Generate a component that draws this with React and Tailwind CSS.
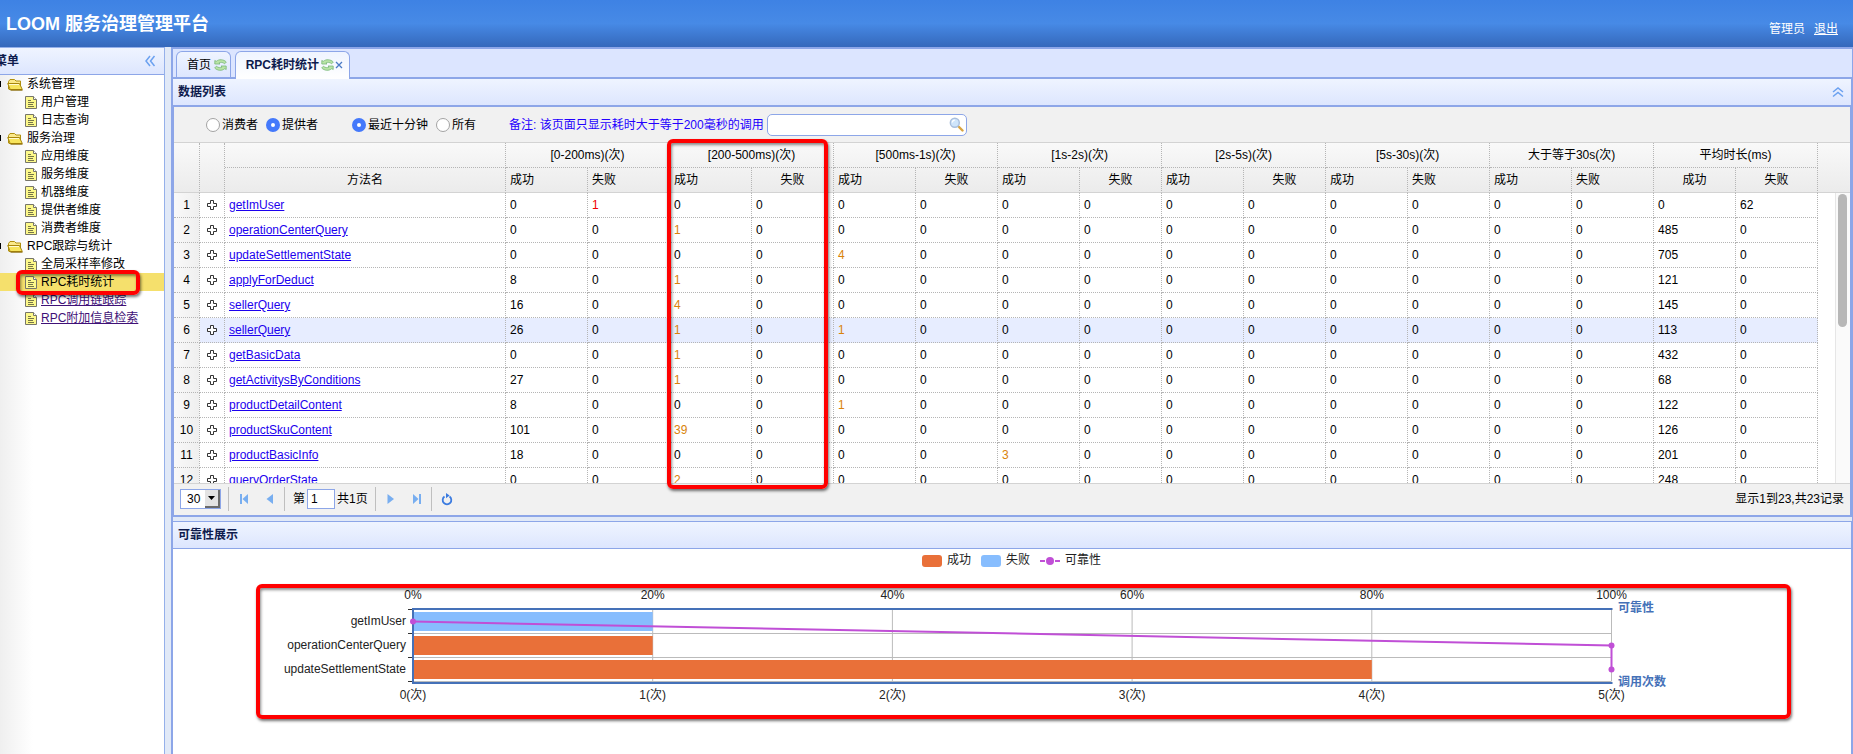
import React from "react";

const RED_BOX =
  "pointer-events-none absolute z-10 rounded-md border-4 border-[#ff0000] shadow-[1px_2px_3px_rgba(0,0,0,0.55),inset_1px_2px_3px_rgba(0,0,0,0.45)]";

const tree = [
  { label: "系统管理", children: [{ label: "用户管理" }, { label: "日志查询" }] },
  {
    label: "服务治理",
    children: [
      { label: "应用维度" },
      { label: "服务维度" },
      { label: "机器维度" },
      { label: "提供者维度" },
      { label: "消费者维度" },
    ],
  },
  {
    label: "RPC跟踪与统计",
    children: [
      { label: "全局采样率修改" },
      { label: "RPC耗时统计", active: true },
      { label: "RPC调用链跟踪", visited: true },
      { label: "RPC附加信息检索", visited: true },
    ],
  },
];

const groups = [
  { label: "[0-200ms)(次)", ok: "text-left", fail: "text-left" },
  { label: "[200-500ms)(次)", ok: "text-left", fail: "text-center" },
  { label: "[500ms-1s)(次)", ok: "text-left", fail: "text-center" },
  { label: "[1s-2s)(次)", ok: "text-left", fail: "text-center" },
  { label: "[2s-5s)(次)", ok: "text-left", fail: "text-center" },
  { label: "[5s-30s)(次)", ok: "text-left", fail: "text-left" },
  { label: "大于等于30s(次)", ok: "text-left", fail: "text-left" },
  { label: "平均时长(ms)", ok: "text-center", fail: "text-center" },
];

const rows = [
  ["getImUser", 0, 1, 0, 0, 0, 0, 0, 0, 0, 0, 0, 0, 0, 0, 0, 62],
  ["operationCenterQuery", 0, 0, 1, 0, 0, 0, 0, 0, 0, 0, 0, 0, 0, 0, 485, 0],
  ["updateSettlementState", 0, 0, 0, 0, 4, 0, 0, 0, 0, 0, 0, 0, 0, 0, 705, 0],
  ["applyForDeduct", 8, 0, 1, 0, 0, 0, 0, 0, 0, 0, 0, 0, 0, 0, 121, 0],
  ["sellerQuery", 16, 0, 4, 0, 0, 0, 0, 0, 0, 0, 0, 0, 0, 0, 145, 0],
  ["sellerQuery", 26, 0, 1, 0, 1, 0, 0, 0, 0, 0, 0, 0, 0, 0, 113, 0],
  ["getBasicData", 0, 0, 1, 0, 0, 0, 0, 0, 0, 0, 0, 0, 0, 0, 432, 0],
  ["getActivitysByConditions", 27, 0, 1, 0, 0, 0, 0, 0, 0, 0, 0, 0, 0, 0, 68, 0],
  ["productDetailContent", 8, 0, 0, 0, 1, 0, 0, 0, 0, 0, 0, 0, 0, 0, 122, 0],
  ["productSkuContent", 101, 0, 39, 0, 0, 0, 0, 0, 0, 0, 0, 0, 0, 0, 126, 0],
  ["productBasicInfo", 18, 0, 0, 0, 0, 0, 3, 0, 0, 0, 0, 0, 0, 0, 201, 0],
  ["queryOrderState", 0, 0, 2, 0, 0, 0, 0, 0, 0, 0, 0, 0, 0, 0, 248, 0],
];

function valueColor(value, index) {
  if (value === 0 || index >= 14) return "text-black";
  if (index % 2 === 1) return "text-[#f00000]";
  return index >= 2 ? "text-[#d9830a]" : "text-black";
}

function FolderIcon() {
  return (
    <svg width="16" height="18" viewBox="0 0 16 18" className="shrink-0" aria-hidden="true">
      <path d="M1.500 14V6.500L3 4.500h4.500L9 6h4.500v8.500H2z" fill="#fbe98a" stroke="#b0900f" />
      <path d="M.7 8.500h11.800l2.800 6H3.200z" fill="#f7e45c" stroke="#a8860c" strokeLinejoin="round" />
      <path d="M2 9.500h10" stroke="#fffbd0" />
      <path d="M3.500 15.200h12" stroke="#8a6c08" />
    </svg>
  );
}

function FileIcon() {
  return (
    <svg width="16" height="18" viewBox="0 0 16 18" className="shrink-0" aria-hidden="true">
      <path d="M2.500 3.500h8l3 3v9h-11z" fill="#fdf98a" stroke="#77766a" />
      <path d="M10.500 3.500v3h3" fill="#fff" stroke="#77766a" />
      <path d="M5 7.500h3M5 9.500h6M5 11.500h5M5 13.500h6" stroke="#77764a" />
    </svg>
  );
}

function RefreshTabIcon() {
  return (
    <svg width="13" height="14" viewBox="0 0 13 14" aria-hidden="true">
      <path d="M.8 6V2.500l1.500.8C5 1 9.500 1.200 12.300 4L10.600 5.800C8.800 4.200 6.800 4 5 4.900L6 6z" fill="#b9e4a6" stroke="#79b878" strokeWidth=".8" />
      <path d="M12.200 8v3.500l-1.500-.8C8 13 3.500 12.800.7 10l1.700-1.800c1.800 1.600 3.800 1.800 5.600.9L7 8z" fill="#b9e4a6" stroke="#79b878" strokeWidth=".8" />
    </svg>
  );
}

function Chevrons({ up }) {
  return (
    <svg width="12" height="12" viewBox="0 0 12 12" fill="none" stroke="#6ba1f0" strokeWidth="1.500" aria-hidden="true">
      {up ? <path d="M1 6l5-4 5 4M1 10.500l5-4 5 4" /> : <path d="M6 1L2 6l4 5M10.500 1l-4 5 4 5" />}
    </svg>
  );
}

function ExpandIcon() {
  return (
    <svg width="10" height="10" viewBox="0 0 10 10" aria-hidden="true">
      <path d="M3.500.5h3v3h3v3h-3v3h-3v-3h-3v-3h3z" fill="#fff" stroke="#333" />
    </svg>
  );
}

function Radio({ name, label, defaultChecked, className }) {
  return (
    <label className={`flex items-center gap-[2px] ${className}`}>
      <input
        type="radio"
        name={name}
        defaultChecked={defaultChecked}
        className="size-[14px] appearance-none rounded-full border border-[#a3a3a3] bg-white checked:border-[5px] checked:border-[#4479fb]"
      />
      {label}
    </label>
  );
}

function Header() {
  return (
    <header className="flex h-[47px] shrink-0 justify-between bg-linear-to-b from-[#3e82e4] via-[#478ae6] to-[#3568bb] text-white">
      <h1 className="pt-3 pl-[6px] text-lg leading-6 font-bold">LOOM 服务治理管理平台</h1>
      <div className="flex gap-[9px] pt-5 pr-[15px] leading-[18px]">
        <span>管理员</span>
        <a href="#logout" className="underline">退出</a>
      </div>
    </header>
  );
}

function Sidebar() {
  return (
    <aside className="flex w-[165px] shrink-0 flex-col border-t border-r border-[#95b0ea] bg-linear-to-r from-[#efefef] to-white to-20%">
      <div className="flex h-[27px] shrink-0 items-center justify-between border-b border-[#8da6e8] bg-linear-to-b from-[#eff4ff] to-[#dde6fe] pr-2 font-bold text-[#0e1b4d]">
        <h2 className="-ml-[5px]">菜单</h2>
        <button type="button" aria-label="收起菜单"><Chevrons /></button>
      </div>
      <nav className="relative">
        <ul>
          {tree.map((group) => (
            <li key={group.label}>
              <div className="flex h-[18px] items-center gap-[2px] whitespace-nowrap">
                <span className="h-[6px] w-[1px] bg-black" />
                <span className="w-[2px]" />
                <FolderIcon />
                <span className="pl-[2px]">{group.label}</span>
              </div>
              <ul>
                {group.children.map((item) => (
                  <li key={item.label} className={`flex h-[18px] items-center whitespace-nowrap pl-[23px] ${item.active ? "bg-[#f5e06c]" : ""}`}>
                    <FileIcon />
                    <a href="#page" className={`ml-[2px] ${item.visited ? "text-[#3f1177] underline" : ""}`}>{item.label}</a>
                  </li>
                ))}
              </ul>
            </li>
          ))}
        </ul>
        <div className={`${RED_BOX} top-[195px] left-4 h-[25px] w-[124px]`} />
      </nav>
    </aside>
  );
}

function Tabs() {
  return (
    <div role="tablist" className="flex h-[30px] shrink-0 items-end gap-1 border-b-2 border-[#8da6e8] bg-[#dce5ff] pl-[3px]">
      <div className="flex h-[26px] w-[55px] items-center justify-end gap-[3px] rounded-t-md border border-b-0 border-[#8da6e8] bg-linear-to-b from-[#eff4ff] to-[#dde6fe] pr-[3px]">
        <button type="button" role="tab" aria-selected="false">首页</button>
        <button type="button" aria-label="刷新首页"><RefreshTabIcon /></button>
      </div>
      <div className="-mb-[2px] flex h-[28px] w-[115px] items-center justify-end rounded-t-md border border-b-0 border-[#8da6e8] bg-linear-to-b from-[#eff4ff] to-white pr-[6px] pb-[2px] font-bold text-[#0e1b4d]">
        <button type="button" role="tab" aria-selected="true" className="mr-[2px] whitespace-nowrap">RPC耗时统计</button>
        <button type="button" aria-label="刷新"><RefreshTabIcon /></button>
        <button type="button" aria-label="关闭" className="ml-[1px]">
          <svg width="8" height="8" viewBox="0 0 8 8" stroke="#4a7ac4" strokeWidth="1.300" aria-hidden="true"><path d="M1 1l6 6M7 1L1 7" /></svg>
        </button>
      </div>
    </div>
  );
}

function Toolbar() {
  return (
    <div className="flex h-[36px] items-center border-b border-[#d3d3d3] bg-[#f1f1f1] pl-8">
      <Radio name="role" label="消费者" className="w-[60px]" />
      <Radio name="role" label="提供者" defaultChecked className="w-[86px]" />
      <Radio name="period" label="最近十分钟" defaultChecked className="w-[84px]" />
      <Radio name="period" label="所有" className="w-[73px]" />
      <label htmlFor="search" className="w-[258px] whitespace-nowrap text-[#2300ff]">备注: 该页面只显示耗时大于等于200毫秒的调用</label>
      <div className="flex h-[22px] w-[200px] items-center rounded-[5px] border border-[#8da6e8] bg-white pr-[2px]">
        <input id="search" type="text" className="min-w-0 flex-1 px-1 outline-none" />
        <button type="button" aria-label="搜索">
          <svg width="15" height="15" viewBox="0 0 15 15" aria-hidden="true">
            <path d="M9.500 9.500l4 4" stroke="#d9a441" strokeWidth="2.400" strokeLinecap="round" />
            <circle cx="5.800" cy="5.800" r="4.500" fill="#cfe5fb" stroke="#a9bfdd" strokeWidth="1.400" />
            <path d="M3.300 5.500a2.600 2.600 0 0 1 2.500-2.300" fill="none" stroke="#fff" strokeWidth="1.200" />
          </svg>
        </button>
      </div>
    </div>
  );
}

const HEAD = "h-[25px] border-r border-dotted border-[#b5b5b5] px-1 font-normal";
const HEAD_LAST = "border-b border-b-[#d3d3d3] [border-bottom-style:solid]";
const CELL = "h-[25px] border-r border-b border-dotted border-[#b5b5b5] px-1";

function DataGrid() {
  return (
    <div className="relative h-[340px] overflow-hidden bg-white">
      <table className="w-full table-fixed border-separate border-spacing-0 whitespace-nowrap">
        <colgroup>
          <col className="w-[26px]" />
          <col className="w-[25px]" />
          <col className="w-[281px]" />
          {groups.map((g) => [
            <col key={`${g.label}-ok`} className="w-[82px]" />,
            <col key={`${g.label}-fail`} className="w-[82px]" />,
          ])}
          <col />
        </colgroup>
        <thead className="bg-linear-to-b from-[#f9f9f9] to-[#ebebeb]">
          <tr>
            <th rowSpan={2} className={`${HEAD} ${HEAD_LAST}`} />
            <th rowSpan={2} className={`${HEAD} ${HEAD_LAST}`} />
            <th className={`${HEAD} border-b`} />
            {groups.map((g) => (
              <th key={g.label} colSpan={2} className={`${HEAD} border-b`}>{g.label}</th>
            ))}
            <th rowSpan={2} className="border-b border-[#d3d3d3]" />
          </tr>
          <tr>
            <th className={`${HEAD} ${HEAD_LAST}`}>方法名</th>
            {groups.map((g) => [
              <th key={`${g.label}-ok`} className={`${HEAD} ${HEAD_LAST} ${g.ok}`}>成功</th>,
              <th key={`${g.label}-fail`} className={`${HEAD} ${HEAD_LAST} ${g.fail}`}>失败</th>,
            ])}
          </tr>
        </thead>
        <tbody>
          {rows.map(([name, ...values], r) => (
            <tr key={r} className={r === 5 ? "bg-[#e7edff]" : ""}>
              <td className="h-[25px] border-r border-b border-dotted border-[#b5b5b5] bg-linear-to-r from-[#f9f9f9] to-[#efefef] text-center">{r + 1}</td>
              <td className="border-r border-b border-dotted border-[#b5b5b5]">
                <button type="button" aria-label="展开" className="flex w-full justify-center"><ExpandIcon /></button>
              </td>
              <td className={CELL}><a href="#method" className="text-[#1c00ee] underline">{name}</a></td>
              {values.map((v, i) => (
                <td key={i} className={`${CELL} ${valueColor(v, i)}`}>{v}</td>
              ))}
              <td className="bg-white" />
            </tr>
          ))}
        </tbody>
      </table>
      <div className="absolute top-[50px] right-0 bottom-0 w-[15px] border-l border-[#e6e6e6] bg-[#fafafa] px-[2px] pt-[1px]">
        <div className="h-[133px] w-[9px] rounded-full bg-[#b7b7b7]" />
      </div>
    </div>
  );
}

function PagerButton({ label, path, className }) {
  return (
    <button type="button" aria-label={label} className={className}>
      <svg width="10" height="12" viewBox="0 0 10 12" fill="#78aef0" aria-hidden="true"><path d={path} /></svg>
    </button>
  );
}

function Pager() {
  return (
    <div className="flex h-[32px] items-center border-t border-[#d3d3d3] bg-[#f1f1f1] pr-[6px] pb-[1px] pl-[6px]">
      <div className="relative flex h-5 w-[41px] border border-[#8da6e8] bg-white">
        <select aria-label="每页条数" className="w-full appearance-none pl-[6px] outline-none" defaultValue="30">
          <option>30</option>
        </select>
        <span className="pointer-events-none absolute top-0 right-0 flex h-[18px] w-[15px] items-center justify-center border-r-2 border-b-2 border-[#6b6b6b] bg-[#e3e3e3]">
          <svg width="7" height="4" viewBox="0 0 7 4" aria-hidden="true"><path d="M0 0h7L3.500 4z" /></svg>
        </span>
      </div>
      <span className="ml-[7px] h-6 w-px bg-[#bfbfbf]" />
      <PagerButton label="第一页" className="ml-[10px]" path="M1 1h2v10H1zM9 1v10L3.500 6z" />
      <PagerButton label="上一页" className="ml-4" path="M8 1v10L1.500 6z" />
      <span className="ml-[9px] h-6 w-px bg-[#bfbfbf]" />
      <label htmlFor="page" className="ml-2">第</label>
      <input id="page" defaultValue="1" className="ml-[2px] h-5 w-7 border border-[#8da6e8] bg-white px-[3px] outline-none" />
      <span className="ml-[2px]">共1页</span>
      <span className="ml-[7px] h-6 w-px bg-[#bfbfbf]" />
      <PagerButton label="下一页" className="ml-[10px]" path="M1.500 1v10L8 6z" />
      <PagerButton label="最后一页" className="ml-4" path="M1 1v10L6.500 6zM7 1h2v10H7z" />
      <span className="ml-[9px] h-6 w-px bg-[#bfbfbf]" />
      <button type="button" aria-label="刷新" className="ml-[9px]">
        <svg width="12" height="13" viewBox="0 0 12 13" aria-hidden="true">
          <path d="M8.500 3.500A4.300 4.300 0 1 1 3.500 3.500" fill="none" stroke="#3b7be0" strokeWidth="1.800" />
          <path d="M5 0v5.200L8.600 2.600z" fill="#3b7be0" />
        </svg>
      </button>
      <span className="ml-auto">显示1到23,共23记录</span>
    </div>
  );
}

function Chart() {
  const left = 240;
  const step = 239.700;
  const ticks = [0, 1, 2, 3, 4, 5];
  const names = ["getImUser", "operationCenterQuery", "updateSettlementState"];
  const px = (n) => left + n * step;
  return (
    <svg viewBox="0 0 1678 205" className="block w-full" fontSize="12" fill="#222" role="img" aria-label="可靠性图表">
      <rect x="749" y="6" width="20" height="12" rx="3" fill="#e97039" />
      <text x="774" y="15">成功</text>
      <rect x="808" y="6" width="20" height="12" rx="3" fill="#87bdfe" />
      <text x="833" y="15">失败</text>
      <path d="M867 12h5M882 12h5" stroke="#c04fd6" strokeWidth="2" />
      <circle cx="877" cy="12" r="4" fill="#c04fd6" />
      <text x="892" y="15">可靠性</text>
      {ticks.slice(1).map((t) => (
        <line key={t} x1={px(t)} x2={px(t)} y1="60" y2="132" stroke="#bbb" />
      ))}
      {[84.500, 108.500, 132.500].map((y) => (
        <line key={y} x1={px(0)} x2={px(5)} y1={y} y2={y} stroke="#bbb" />
      ))}
      {[60.500, 84.500, 108.500, 132.500].map((y) => (
        <line key={y} x1="235" x2="240" y1={y} y2={y} stroke="#333" />
      ))}
      <rect x={px(0)} y="63" width={step} height="19" fill="#87bdfe" />
      <rect x={px(0)} y="87" width={step} height="19" fill="#e97039" />
      <rect x={px(0)} y="111" width={step * 4} height="19" fill="#e97039" />
      <path d={`M${px(5) + 1} 60H${px(0)}V134H${px(5) + 1}`} fill="none" stroke="#4571b8" strokeWidth="2" />
      <polyline points={`${px(0)},72.500 ${px(5)},96.500 ${px(5)},120.500`} fill="none" stroke="#c04fd6" strokeWidth="2" />
      <circle cx={px(0)} cy="72.500" r="3" fill="#c04fd6" />
      <circle cx={px(5)} cy="96.500" r="3" fill="#c04fd6" />
      <circle cx={px(5)} cy="120.500" r="3" fill="#c04fd6" />
      {ticks.map((t) => (
        <g key={t} textAnchor="middle">
          <text x={px(t)} y="50">{`${t * 20}%`}</text>
          <text x={px(t)} y="150">{`${t}(次)`}</text>
        </g>
      ))}
      {names.map((n, i) => (
        <text key={n} x="233" y={76 + i * 24} textAnchor="end">{n}</text>
      ))}
      <g fill="#4571b8" fontWeight="bold">
        <text x="1445" y="63">可靠性</text>
        <text x="1445" y="137">调用次数</text>
      </g>
    </svg>
  );
}

export default function App() {
  return (
    <div className="flex h-screen flex-col overflow-hidden bg-[#e1e9f7] font-['Liberation_Sans','Noto_Sans_CJK_SC',sans-serif] text-xs leading-[18px] text-black">
      <Header />
      <div className="flex min-h-0 flex-1">
        <Sidebar />
        <main className="ml-[6px] flex min-w-0 flex-1 flex-col border-t-2 border-r border-l-2 border-[#8da6e8]">
          <Tabs />
          <section>
            <div className="flex h-[28px] items-center justify-between border-r border-b-2 border-[#8da6e8] bg-linear-to-b from-[#eff4ff] to-[#dde6fe] pr-[7px] pl-[5px] font-bold text-[#0e1b4d]">
              <h2>数据列表</h2>
              <button type="button" aria-label="收起"><Chevrons up /></button>
            </div>
            <div className="relative border-r-2 border-b-2 border-l border-[#8da6e8]">
              <Toolbar />
              <DataGrid />
              <Pager />
              <div className={`${RED_BOX} top-8 left-[493px] h-[350px] w-[161px]`} />
            </div>
          </section>
          <section className="mt-[4px] flex min-h-0 flex-1 flex-col overflow-hidden border-t border-r border-[#8da6e8] bg-white">
            <div className="flex h-[27px] shrink-0 items-center border-b border-[#8da6e8] bg-linear-to-b from-[#eff4ff] to-[#dde6fe] pl-[5px] font-bold text-[#0e1b4d]">
              <h2>可靠性展示</h2>
            </div>
            <div className="relative">
              <Chart />
              <div className={`${RED_BOX} top-[35px] right-[60px] left-[83px] h-[135px]`} />
            </div>
          </section>
        </main>
      </div>
    </div>
  );
}
